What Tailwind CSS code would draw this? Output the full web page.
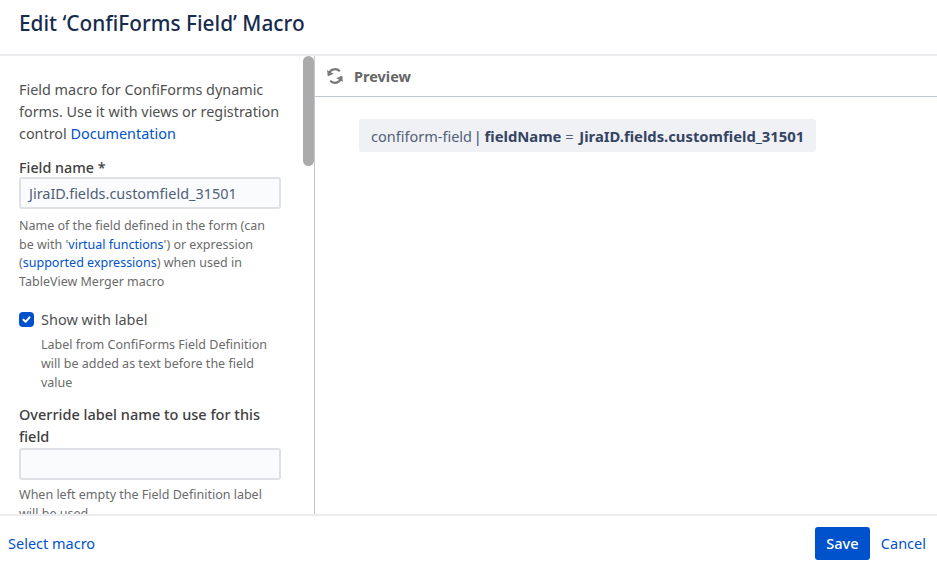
<!doctype html>
<html lang="en">
  <head>
    <meta charset="UTF-8" />
    <title>Edit Macro</title>
    <script src="https://cdn.jsdelivr.net/npm/@tailwindcss/browser@4"></script>
  </head>
  <body class="bg-white font-['Noto_Sans',sans-serif] text-[#42526e] overflow-hidden">
    <div class="flex h-[570px] w-[937px] flex-col">
      <!-- Header -->
      <div class="flex h-[56px] shrink-0 items-start border-b-2 border-[#ebecf0] pl-[19px] pt-[8px]">
        <h1 class="text-[20.8px] leading-[30px] font-medium text-[#172b4d]">Edit ‘ConfiForms Field’ Macro</h1>
      </div>

      <!-- Body -->
      <div class="flex min-h-0 flex-1">
        <!-- Form column -->
        <div class="relative w-[315px] shrink-0 overflow-hidden border-r border-[#c1c7d0] pl-[19px] pr-[33px] pt-[23px]">
          <p class="text-[14.4px] leading-[22px] text-[#505050]">
            Field macro for ConfiForms dynamic forms. Use it with views or registration control
            <a class="text-[#0052cc]">Documentation</a>
          </p>
          <label class="mt-[14px] block text-[14.3px] leading-[18px] font-medium text-[#404040]">Field name *</label>
          <div class="flex h-[32px] w-[262px] items-center rounded-[3px] border-2 border-[#dfe1e6] bg-[#fafbfc] px-[8px] pt-[1px] text-[14.45px] text-[#505f79]">JiraID.fields.customfield_31501</div>
          <p class="mt-[8px] text-[12.5px] leading-[18.5px] text-[#6b6b6b]">
            Name of the field defined in the form (can be with '<a class="text-[#0052cc]">virtual functions</a>') or expression (<a class="text-[#0052cc]">supported expressions</a>) when used in TableView Merger macro
          </p>
          <div class="mt-[18px] flex items-center gap-[7px]">
            <span class="flex h-[15px] w-[15px] items-center justify-center rounded-[4px] bg-[#0052cc]">
              <svg width="11" height="11" viewBox="0 0 11 11" fill="none" stroke="white" stroke-width="2" stroke-linecap="round" stroke-linejoin="round">
                <path d="M2.5 5.8 4.6 7.8 8.5 3.4" />
              </svg>
            </span>
            <span class="text-[14.5px] leading-[20px] text-[#505050]">Show with label</span>
          </div>
          <p class="mt-[6px] pl-[22px] text-[12.5px] leading-[19px] text-[#6b6b6b]">
            Label from ConfiForms Field Definition will be added as text before the field value
          </p>
          <label class="mt-[11px] block text-[14.5px] leading-[22px] font-medium text-[#404040]">Override label name to use for this field</label>
          <div class="mt-[1px] h-[32px] w-[262px] rounded-[3px] border-2 border-[#dfe1e6] bg-[#fafbfc]"></div>
          <p class="mt-[5px] text-[12.5px] leading-[19px] text-[#6b6b6b]">When left empty the Field Definition label will be used</p>
          <!-- Scrollbar thumb -->
          <div class="absolute right-0 top-0 h-[110px] w-[11px] rounded-[6px] bg-[#ababab]"></div>
        </div>

        <!-- Preview column -->
        <div class="min-w-0 flex-1">
          <div class="flex h-[41px] items-center gap-[10px] border-b border-[#c1c7d0] pl-[11px]">
            <svg width="18" height="18" viewBox="0 0 18 18" fill="none" stroke="#7a7a7a" stroke-width="2.2">
              <path d="M2.6 8.5A6.5 6.5 0 0 1 13.8 4.2" />
              <path d="M15.4 9.5A6.5 6.5 0 0 1 4.2 13.8" />
              <path d="M1 3 2 9.2 7.6 6.8Z" fill="#7a7a7a" stroke="none" />
              <path d="M17 15 16 8.8 10.4 11.2Z" fill="#7a7a7a" stroke="none" />
            </svg>
            <span class="pt-[1px] text-[14.5px] font-bold text-[#666666]">Preview</span>
          </div>
          <div class="pl-[44px] pt-[22px]">
            <div class="inline-block h-[33px] rounded-[3px] bg-[#f0f1f4] px-[12px] text-[14.5px] leading-[34px] text-[#505f79]">
              confiform-field <span class="ml-[-2px] text-[#344563]">|</span> <b class="ml-[-1px] text-[14.8px] font-bold text-[#344563]">fieldName</b> = <b class="ml-[2px] text-[14.8px] font-bold text-[#344563]">JiraID.fields.customfield_31501</b>
            </div>
          </div>
        </div>
      </div>

      <!-- Footer -->
      <div class="flex h-[56px] shrink-0 items-center justify-between border-t-2 border-[#ebecf0] pl-[8px] pr-[11px] pt-[1px]">
        <a class="text-[14.5px] text-[#0052cc]">Select macro</a>
        <div class="flex items-center gap-[11px]">
          <button class="h-[33px] w-[55px] rounded-[3px] bg-[#0052cc] text-[14.5px] font-medium text-white">Save</button>
          <a class="text-[14.5px] text-[#0052cc]">Cancel</a>
        </div>
      </div>
    </div>
  </body>
</html>
